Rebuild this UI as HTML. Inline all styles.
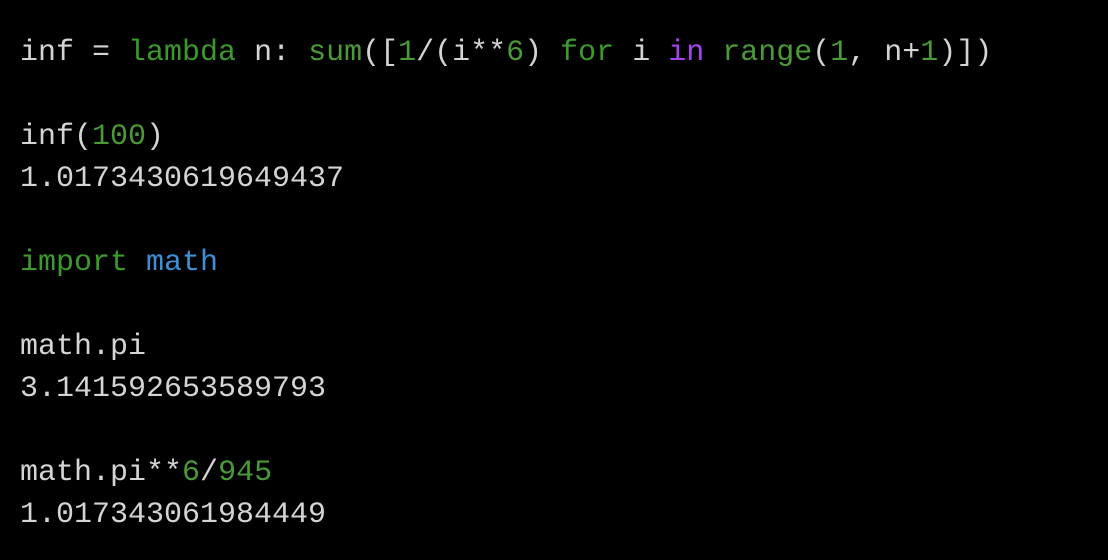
<!DOCTYPE html>
<html><head><meta charset="utf-8"><style>
html,body{margin:0;padding:0;background:#000;width:1108px;height:560px;overflow:hidden}
pre{margin:0;position:absolute;left:20px;top:32px;font-family:"Liberation Mono",monospace;font-size:30px;line-height:42px;color:#d4d4d4}
.k{color:#3c9a2c}
.g{color:#4a9a38}
.p{color:#a445ec}
.b{color:#3f8fd6}
</style></head><body>
<pre>inf = <span class="k">lambda</span> n: <span class="g">sum</span>([<span class="g">1</span>/(i**<span class="g">6</span>) <span class="k">for</span> i <span class="p">in</span> <span class="g">range</span>(<span class="g">1</span>, n+<span class="g">1</span>)])

inf(<span class="g">100</span>)
1.0173430619649437

<span class="k">import</span> <span class="b">math</span>

math.pi
3.141592653589793

math.pi**<span class="g">6</span>/<span class="g">945</span>
1.017343061984449</pre>
</body></html>
